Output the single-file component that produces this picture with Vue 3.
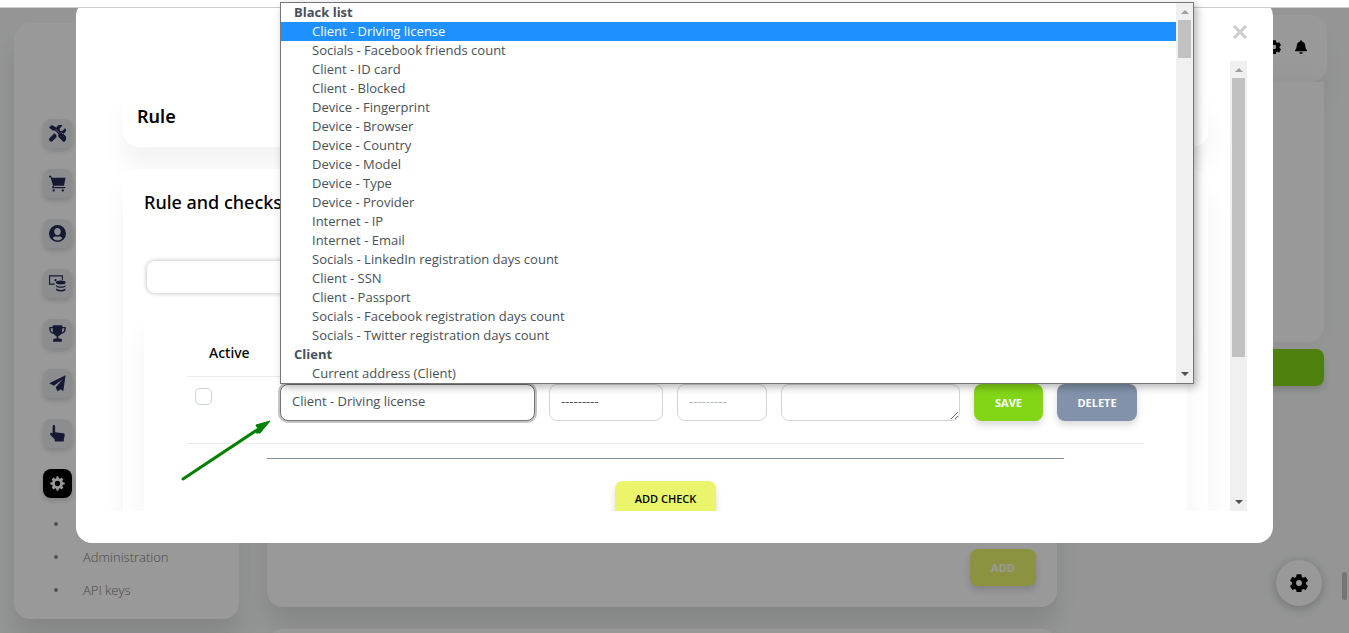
<script setup>
import { ref } from 'vue'

const nav = [
  { label: 'Tools', paths: ['M78 0 0 78l112 84h63l111 111c-16 34-10 76 18 104l116 117c15 14 38 14 52 0l69-69c15-15 15-38 0-53L424 255c-28-28-70-35-104-18L209 126V64zM506 116c-4-14-21-19-31-9l-75 74-68-11-11-68 74-75c10-10 5-27-9-30-48-12-101 1-139 38-29 29-43 67-42 105l88 88c37-8 77 2 106 31l12 12c24-6 47-18 65-36 38-38 50-91 30-119zM227 307l-61-61L19 394c-25 25-25 65 0 90s65 25 90 0l121-121c-9-18-10-37-3-56z'] },
  { label: 'Shop', paths: ['M0 20h66l20 65h410l-42 240H150l-12 40h350v36H100l-2-36 22-60L45 64H0z', 'M140 430a35 35 0 1 0 .1 0zM415 430a35 35 0 1 0 .1 0z'] },
  { label: 'Clients', paths: ['M256 0a256 256 0 1 0 0 512 256 256 0 0 0 0-512zm0 90c57 0 98 42 98 104 0 65-42 116-98 116s-98-51-98-116c0-62 41-104 98-104zm0 380c-66 0-117-28-143-76 28-38 62-52 98-44 30 8 60 8 90 0 36-8 70 6 98 44-26 48-77 76-143 76z'] },
  { label: 'Payments', paths: ['M0 10h420v140h-34V44H34v212h140v34H0zM195 120a34 34 0 1 0 .1 0z', 'M355 165c-88 0-150 25-150 58s62 60 150 60 150-27 150-60-62-58-150-58zM210 305c30 26 84 38 145 38s115-12 145-38v24c0 32-62 58-145 58s-145-26-145-58zM210 410c30 26 84 38 145 38s115-12 145-38v24c0 34-62 60-145 60s-145-26-145-60z'] },
  { label: 'Awards', paths: ['M112 5h288v52h104v76c0 66-56 128-140 140-22 34-50 56-80 62v70h50c34 0 54 22 54 54v46H124v-46c0-32 20-54 54-54h50v-70c-30-6-58-28-80-62C64 261 8 199 8 133V57h104zm-60 92v36c0 40 26 74 72 90-8-36-12-76-12-126zm348 0c0 50-4 90-12 126 46-16 72-50 72-90V97z'] },
  { label: 'Messages', paths: ['M500 10 430 490 350 430 260 495 200 380 410 130 150 320 5 250z'] },
  { label: 'Actions', paths: ['M110 45c0-56 75-56 75 0v170l245 35c30 5 45 25 43 55l-25 125v70H175v-60L45 300c-35-50 25-90 65-50z'] },
  { label: 'Settings', active: true, paths: ['M225 10h62l14 67 37 16 57-38 62 62-38 57 16 37 67 14v62l-67 14-16 37 38 57-62 62-57-38-37 16-14 67h-62l-14-67-37-16-57 38-62-62 38-57-16-37-67-14v-62l67-14 16-37-38-57 62-62 57 38 37-16zM256 166a90 90 0 1 0 0 180 90 90 0 0 0 0-180z'] }
]
const cog = 'M190 10h132l15 73 38 22 71-24 66 114-56 50v44l56 50-66 114-71-24-38 22-15 73H190l-15-73-38-22-71 24L0 339l56-50v-44L0 195 66 81l71 24 38-22zM256 172a84 84 0 1 0 0 168 84 84 0 0 0 0-168z'
const groups = [
  {
    name: 'Black list',
    options: [
      'Client - Driving license', 'Socials - Facebook friends count', 'Client - ID card', 'Client - Blocked',
      'Device - Fingerprint', 'Device - Browser', 'Device - Country', 'Device - Model', 'Device - Type',
      'Device - Provider', 'Internet - IP', 'Internet - Email', 'Socials - LinkedIn registration days count',
      'Client - SSN', 'Client - Passport', 'Socials - Facebook registration days count',
      'Socials - Twitter registration days count'
    ]
  },
  { name: 'Client', options: ['Current address (Client)'] }
]
const selected = ref('Client - Driving license')
</script>

<template>
  <div class="page">
    <div class="strip"></div>

    <div class="backdrop">
      <aside class="sidebar">
        <nav>
          <a v-for="item in nav" :key="item.label" href="#" class="tile" :class="{ active: item.active }" :aria-label="item.label">
            <svg viewBox="0 0 512 512"><path v-for="d in item.paths" :key="d" :d="d" fill-rule="evenodd" /></svg>
          </a>
        </nav>
        <ul class="submenu">
          <li><a href="#" aria-label="General"></a></li>
          <li><a href="#">Administration</a></li>
          <li><a href="#">API keys</a></li>
        </ul>
      </aside>

      <div class="content">
        <header class="topbar">
          <svg viewBox="0 0 512 512"><path :d="cog" fill-rule="evenodd" /></svg>
          <svg viewBox="0 0 448 512"><path d="M224 512c35 0 64-29 64-64H160c0 35 29 64 64 64zM439 362c-19-21-55-52-55-154 0-78-54-140-128-155V32a32 32 0 1 0-64 0v21C118 68 64 130 64 208c0 102-36 133-55 154-26 28-5 54 23 54h384c28 0 49-26 23-54z" /></svg>
        </header>
        <div class="columns">
          <div class="middle">
            <section class="panel"><button class="btn lime faded">ADD</button></section>
            <section class="panel next"></section>
          </div>
          <div class="side">
            <section class="side-card"></section>
            <button class="btn green side-btn" aria-label="Apply"></button>
          </div>
        </div>
      </div>
      <button class="fab" aria-label="Configurator">
        <svg viewBox="0 0 512 512"><path :d="cog" fill-rule="evenodd" /></svg>
      </button>
      <div class="page-thumb"></div>
    </div>

    <div class="overlay">
      <div class="modal" role="dialog" aria-label="Rule">
        <div class="modal-head">
          <button class="close" aria-label="Close">
            <svg viewBox="0 0 16 16"><path d="M2 2 14 14M14 2 2 14" /></svg>
          </button>
        </div>
        <div class="modal-body">
          <div class="viewport">
            <section class="card title-card"><h1>Rule</h1></section>
            <section class="card checks-card">
              <h2>Rule and checks</h2>
              <input class="name" type="text" aria-label="Name" />
              <div class="card checks">
                <table>
                  <colgroup>
                    <col class="c-active" /><col class="c-check" /><col class="c-op" /><col class="c-val" />
                    <col /><col class="c-save" /><col class="c-del" />
                  </colgroup>
                  <thead>
                    <tr><th scope="col">Active</th><td></td><td></td><td></td><td></td><td></td><td></td></tr>
                  </thead>
                  <tbody>
                    <tr>
                      <td><input class="tick" type="checkbox" aria-label="Active" /></td>
                      <td>
                        <select v-model="selected" class="field open" aria-label="Check">
                          <optgroup v-for="g in groups" :key="g.name" :label="g.name">
                            <option v-for="o in g.options" :key="o">{{ o }}</option>
                          </optgroup>
                        </select>
                      </td>
                      <td><select class="field" aria-label="Operator"><option>---------</option></select></td>
                      <td><select class="field" disabled aria-label="Value"><option>---------</option></select></td>
                      <td><textarea class="field" aria-label="Description"></textarea></td>
                      <td><button class="btn green">SAVE</button></td>
                      <td><button class="btn slate">DELETE</button></td>
                    </tr>
                  </tbody>
                </table>
                <hr />
                <button class="btn lime add-check">ADD CHECK</button>
              </div>
            </section>
          </div>
          <div class="scrollbar">
            <i class="up"></i><span class="thumb"></span><i class="down"></i>
          </div>
        </div>
      </div>

      <svg class="arrow" viewBox="0 0 90 62">
        <path d="M2 59 76 10" stroke="#008000" stroke-width="3" stroke-linecap="round" />
        <path d="M89 1 75 5 77 9 75 13 79 13Z" fill="#008000" stroke="#008000" />
      </svg>

      <div class="popup">
        <div class="list" role="listbox" aria-label="Check">
          <div v-for="g in groups" :key="g.name" role="group" :aria-label="g.name">
            <div class="group-name">{{ g.name }}</div>
            <div v-for="o in g.options" :key="o" class="option" role="option" :class="{ current: o === selected }" :aria-selected="o === selected" @click="selected = o">{{ o }}</div>
          </div>
        </div>
        <div class="scrollbar">
          <i class="up"></i><span class="thumb"></span><i class="down"></i>
        </div>
      </div>
    </div>
  </div>
</template>

<style>
body { margin: 0; }
</style>

<style scoped>
* { box-sizing: border-box; }
.page {
  position: relative;
  height: 100vh;
  overflow: hidden;
  background: #f8f9fa;
  color: #000;
  font-family: "Open Sans", "Noto Sans", sans-serif;
  font-size: 13px;
}
button, input, select, textarea { font-family: inherit; margin: 0; }
h1, h2, ul { margin: 0; padding: 0; }
h1, h2, th { font-family: "Noto Sans", "Open Sans", sans-serif; }
.strip {
  position: relative;
  z-index: 1;
  height: 8px;
  background: #fff;
  border-bottom: 1px solid #ccc;
}

/* page behind the dialog */
.backdrop { display: flex; align-items: flex-start; padding-left: 14px; }
.sidebar {
  flex: none;
  width: 225px;
  margin-top: 15px;
  padding: 96px 0 13px 29px;
  background: #fff;
  border-radius: 16px;
  box-shadow: 0 20px 27px rgba(0, 0, 0, .1);
}
nav { display: flex; flex-direction: column; gap: 21px; }
.tile {
  display: flex;
  align-items: center;
  justify-content: center;
  width: 29px;
  height: 29px;
  border-radius: 8px;
  background: #e9ecef;
  box-shadow: 0 3px 5px rgba(0, 0, 0, .15);
}
.tile svg { width: 17px; height: 17px; fill: #262b58; }
.tile.active { background: #000; }
.tile.active svg { width: 15px; height: 15px; fill: #fff; }
.submenu { margin-top: 9px; list-style: none; }
.submenu li { display: flex; align-items: center; height: 33px; padding-left: 11px; gap: 25px; }
.submenu li::before { content: ""; width: 4px; height: 4px; border-radius: 50%; background: #8a8a8a; }
.submenu a { color: #7c7c7c; font-weight: 300; text-decoration: none; }
.content { flex: 1; min-width: 0; padding: 7px 22px 0 28px; }
.topbar {
  display: flex;
  justify-content: flex-end;
  align-items: center;
  gap: 14px;
  height: 67px;
  padding: 0 20px 3px 0;
  background: #fff;
  border-radius: 16px;
  box-shadow: 0 20px 27px rgba(0, 0, 0, .05);
}
.topbar svg { width: 12px; height: 14px; }
.topbar svg:first-child { width: 14px; }
.columns { display: flex; gap: 28px; padding-right: 3px; }
.middle { flex: none; width: 790px; }
.panel {
  display: flex;
  align-items: flex-end;
  justify-content: flex-end;
  height: 525px;
  padding: 21px;
  background: #fff;
  border-radius: 16px;
  box-shadow: 0 20px 27px rgba(0, 0, 0, .1);
}
.panel.next { height: 60px; margin-top: 22px; }
.side { flex: 1; }
.side-card { height: 260px; background: #fff; border-radius: 0 0 16px 16px; box-shadow: 0 0 27px rgba(0, 0, 0, .05); }
.side-btn { width: 100%; margin-top: 7px; }
.fab {
  position: absolute;
  right: 27px;
  bottom: 27px;
  display: flex;
  align-items: center;
  justify-content: center;
  width: 46px;
  height: 46px;
  border: 0;
  border-radius: 50%;
  background: #fff;
  box-shadow: 0 2px 12px rgba(0, 0, 0, .25);
}
.fab svg { width: 18px; height: 18px; }
.page-thumb { position: absolute; right: 2px; bottom: 33px; width: 5px; height: 28px; border-radius: 3px; background: #c4c4c4; }

/* dialog */
.overlay { position: absolute; inset: 0; background: rgba(0, 0, 0, .4); }
.modal { margin: 0 76px; padding: 0 26px 32px; background: #fff; border-radius: 16px; }
.modal-head { display: flex; justify-content: flex-end; height: 61px; padding-top: 22px; }
.close { width: 20px; height: 20px; padding: 2px; margin-right: -3px; border: 0; background: none; }
.close svg { display: block; width: 16px; height: 16px; fill: none; stroke: #ccc; stroke-width: 3; }
.modal-body { display: flex; max-height: calc(100vh - 183px); }
.viewport { flex: 1; min-width: 0; padding: 28px 22px 0 21px; overflow: hidden; }
.card { border-radius: 16px; background: #fff; box-shadow: 0 20px 27px rgba(0, 0, 0, .05); }
h1 { font-size: 18px; line-height: 26px; font-weight: 600; }
.title-card { padding: 14px 14px 18px; }
.checks-card { margin-top: 22px; padding: 20px 21px 40px; }
h2 { font-size: 18px; line-height: 26px; font-weight: 500; }
.name {
  display: block;
  width: 50%;
  height: 32px;
  margin: 46px 0 15px 3px;
  border: 0;
  border-radius: 8px;
  box-shadow: 0 0 4px 1px rgba(0, 0, 0, .2);
}
.checks { padding: 25px 43px 40px; }
table { width: 100%; table-layout: fixed; border-collapse: separate; border-spacing: 0; }
.c-active { width: 86px; }
.c-check { width: 269px; }
.c-op { width: 128px; }
.c-val { width: 104px; }
.c-save { width: 83px; }
.c-del { width: 94px; }
td, th { padding: 7px 7px 22px; vertical-align: top; border-bottom: 1px solid #e9ecef; }
thead td, thead th { padding: 8px 0 11px 22px; text-align: left; font-size: 14px; line-height: 24px; font-weight: 500; }
.tick { display: block; appearance: none; width: 17px; height: 17px; margin: 4px 0 0 1px; border: 1px solid #cbd3da; border-radius: 5px; }
.field {
  display: block;
  appearance: none;
  width: 100%;
  height: 37px;
  padding: 0 11px 4px;
  border: 1px solid #d2d6da;
  border-radius: 8px;
  background: #fff;
  color: #495057;
  font-size: 13px;
  opacity: 1;
}
.field:disabled { color: #adb5bd; }
.field.open { border-color: #767676; box-shadow: 0 0 0 2px #c4c4c4; }
.btn {
  display: block;
  width: 100%;
  height: 37px;
  padding: 0;
  border: 0;
  border-radius: 8px;
  color: #fff;
  font-size: 11px;
  font-weight: 700;
  box-shadow: 0 4px 7px rgba(0, 0, 0, .15);
}
.green { background: #82d616; }
.slate { background: #8392ab; }
.lime { background: #eaf56b; }
.btn.faded { width: 66px; }
hr { margin: 14px 80px 22px; border: 0; border-top: 1px solid #8392ab; }
.btn.add-check { width: 101px; margin: 0 auto; padding-bottom: 2px; color: #000; font-weight: 600; }

.scrollbar { flex: none; display: flex; flex-direction: column; align-items: center; width: 17px; background: #f0f0f0; }
.scrollbar i { width: 0; height: 0; border: 4px solid transparent; }
.scrollbar .up { margin: 3px 0 6px; border-bottom-color: #a0a0a0; }
.scrollbar .down { margin: auto 0 3px; border-top-color: #505050; }
.scrollbar .thumb { width: 13px; height: 62%; background: #c1c1c1; }

.arrow { position: absolute; left: 181px; top: 420px; width: 90px; height: 62px; fill: none; }

/* opened list */
.popup {
  position: absolute;
  left: 280px;
  right: 155px;
  top: 2px;
  z-index: 2;
  display: flex;
  border: 1px solid #767676;
  background: #fff;
  box-shadow: 3px 3px 8px rgba(0, 0, 0, .3);
  color: #495057;
}
.popup .thumb { height: 38px; }
.list { flex: 1; line-height: 19px; }
.group-name { padding-left: 13px; font-weight: 700; }
.option { padding-left: 31px; }
.option.current { background: #1e90ff; color: #fff; }
</style>
